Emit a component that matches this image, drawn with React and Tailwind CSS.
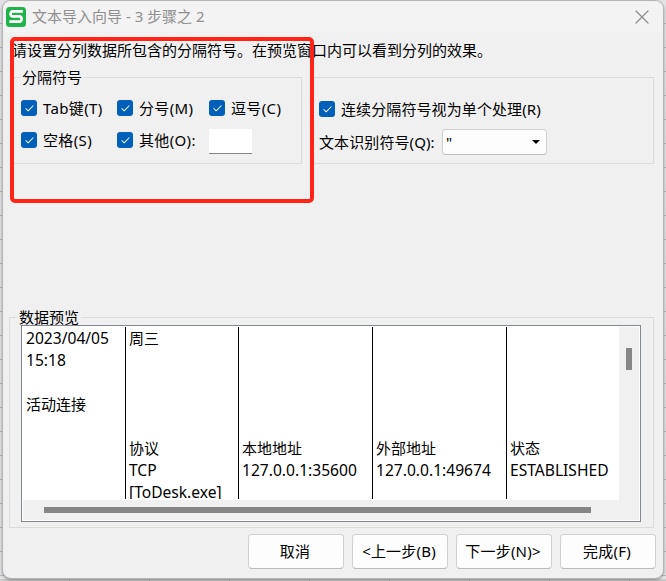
import { Check, X } from 'lucide-react'

const columns = [
  { width: 'w-[103px]', lines: ['2023/04/05', '15:18', '', '活动连接'] },
  { width: 'w-[113px]', lines: ['周三', '', '', '', '', '协议', 'TCP', '[ToDesk.exe]'] },
  { width: 'w-[134px]', lines: ['', '', '', '', '', '本地地址', '127.0.0.1:35600'] },
  { width: 'w-[134px]', lines: ['', '', '', '', '', '外部地址', '127.0.0.1:49674'] },
  { width: 'w-[112px]', lines: ['', '', '', '', '', '状态', 'ESTABLISHED'] },
]

const buttons = ['取消', '<上一步(B)', '下一步(N)>', '完成(F)']

export default function App() {
  return (
    <div className="h-[581px] w-[666px] overflow-hidden bg-[#e4e4e7] bg-[repeating-linear-gradient(to_bottom,transparent_0_23px,#b9bac3_23px_24px)] pl-[2px] font-['Noto_Sans','Noto_Sans_CJK_SC',sans-serif] text-[15px] leading-[22px] text-black">
      <div className="relative h-[579px] w-[662px] rounded-[9px] border border-[#b4b4b5] bg-[#f0f0f0] shadow-[0_1px_3px_rgba(0,0,0,0.35)]">
        <TitleBar />

        <p className="mt-[7px] ml-[9px] h-[22px] whitespace-nowrap">
          请设置分列数据所包含的分隔符号。在预览窗口内可以看到分列的效果。
        </p>

        <div className="mt-[5px] ml-2 flex items-end gap-[9px]">
          <fieldset className="h-[98px] w-[291px] border border-[#dcdcdc]">
            <legend className="ml-2 px-[2px]">分隔符号</legend>
            <div className="grid grid-cols-[96px_92px_1fr] gap-y-2 pt-2 pl-[9px] tracking-[0.35px]">
              <Checkbox label="Tab键(T)" />
              <Checkbox label="分号(M)" />
              <Checkbox label="逗号(C)" />
              <Checkbox label="空格(S)" />
              <Checkbox label="其他(O):" />
              <input className="mt-px h-[25px] w-[43px] border-b border-[#868686] bg-white outline-none" />
            </div>
          </fieldset>

          <div className="flex h-[87px] w-[343px] flex-col gap-2 border border-[#dcdcdc] pt-[19px] pl-[7px] tracking-[0.1px]">
            <Checkbox label="连续分隔符号视为单个处理(R)" />
            <div className="flex items-center">
              <span className="w-[123px] whitespace-nowrap">文本识别符号(Q):</span>
              <div className="flex h-[26px] w-[105px] items-center justify-between rounded-[4px] border border-[#d0d0d0] border-b-[#bcbcbc] bg-[#fdfdfd] pr-[6px] pl-[3px]">
                <span>"</span>
                <svg width="8" height="4" viewBox="0 0 8 4">
                  <path d="M0 0h8L4 4z" />
                </svg>
              </div>
            </div>
          </div>
        </div>

        <fieldset className="mt-[142px] ml-[6px] h-[222px] w-[645px] border border-[#dcdcdc]">
          <legend className="ml-[7px] px-[2px]">数据预览</legend>
          <Preview />
        </fieldset>

        <div className="mt-[6px] flex justify-end gap-2 pr-[7px]">
          {buttons.map((label) => (
            <button
              key={label}
              className="h-[35px] w-24 rounded-[4px] border border-[#d0d0d0] border-b-[#bcbcbc] bg-[#fdfdfd] pr-[2px] pb-[2px] tracking-[0.2px] whitespace-nowrap"
            >
              {label}
            </button>
          ))}
        </div>

        {/* highlight over the delimiter options */}
        <div className="pointer-events-none absolute top-[36px] left-[7px] h-[166px] w-[304px] rounded-[5px] border-4 border-[#ff2418]" />
      </div>
      <div className="ml-[-2px] h-[2px] bg-[#cacacb] bg-[repeating-linear-gradient(to_right,transparent_0_69px,#aaaab0_69px_70px,transparent_70px_80px)]" />
    </div>
  )
}

function TitleBar() {
  return (
    <div className="flex h-[31px] items-center rounded-t-[8px] bg-[#f3f3f3] pr-[9px] pl-[3px] text-[#8f8f8f]">
      <svg width="20" height="20" viewBox="0 0 20 20" fill="none">
        <rect width="20" height="20" rx="3.5" fill="#20b24b" />
        <path
          d="M16.8 4.4H6.8Q4.6 4.4 4.6 6.9T6.8 9.4h6.4q2.4 0 2.4 2.6t-2.4 2.6H3.4"
          stroke="#fff"
          strokeWidth="2.6"
        />
      </svg>
      <span className="ml-[6px] flex-1 pb-[2px]">文本导入向导 - 3 步骤之 2</span>
      <X size={24} strokeWidth={1.2} />
    </div>
  )
}

function Checkbox({ label }) {
  return (
    <label className="flex h-6 items-center gap-[6px] whitespace-nowrap">
      <span className="flex h-4 w-4 items-center justify-center rounded-[3px] bg-[#005fb8]">
        <Check size={11} strokeWidth={2.2} className="text-white" />
      </span>
      {label}
    </label>
  )
}

function Preview() {
  return (
    <div className="-mt-[3px] ml-[11px] h-[197px] w-[620px] border border-[#828790] bg-white p-px">
      <div className="flex h-[173px]">
        <div className="flex h-[172px] w-[596px] overflow-hidden">
          {columns.map((col, i) => (
            <div
              key={i}
              className={`${col.width} shrink-0 border-r border-black pl-[3px] whitespace-nowrap last:border-r-0`}
            >
              {col.lines.map((line, j) => (
                <div key={j} className={`h-[22px] ${/^[\x20-\x7e]+$/.test(line) ? 'text-[15.6px]' : ''}`}>
                  {line}
                </div>
              ))}
            </div>
          ))}
        </div>
        <div className="w-5 bg-[#f0f0f0] pt-[21px] pl-[7px]">
          <div className="h-[22px] w-[6px] bg-[#868686]" />
        </div>
      </div>
      <div className="h-5 bg-[#f0f0f0] pt-[7px] pl-[21px]">
        <div className="h-[6px] w-[547px] bg-[#868686]" />
      </div>
    </div>
  )
}
